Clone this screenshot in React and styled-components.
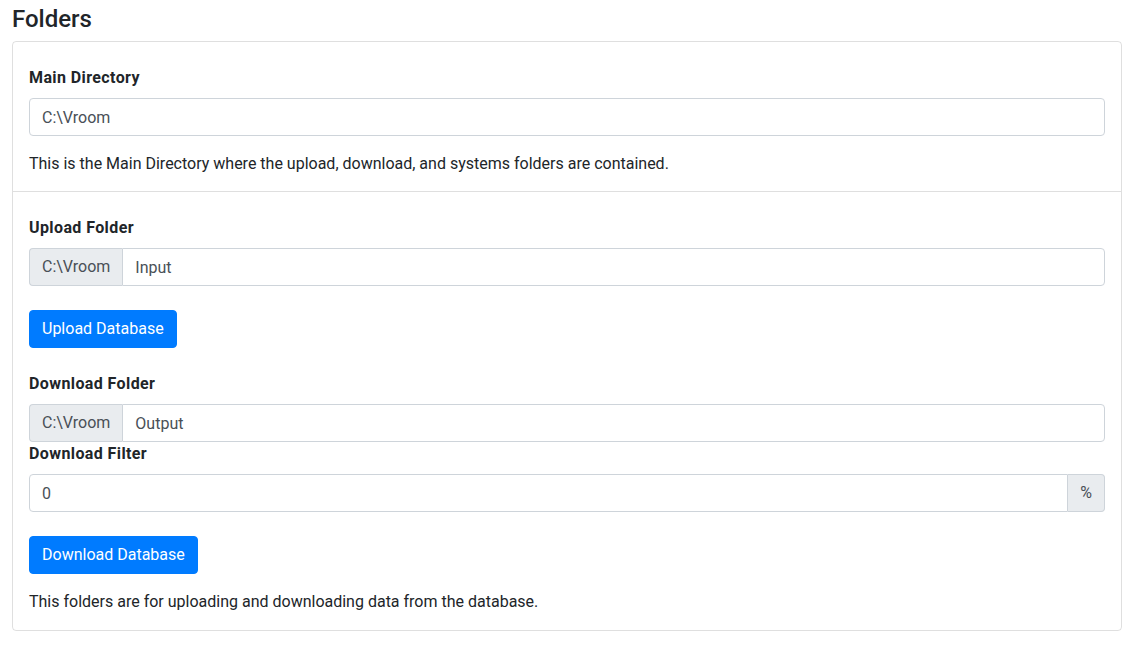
import React from 'react';
import styled, { createGlobalStyle } from 'styled-components';

const GlobalStyle = createGlobalStyle`
  * {
    box-sizing: border-box;
  }
  body {
    margin: 0;
    background: #fff;
    color: #212529;
    font-family: "Segoe UI", Roboto, "Liberation Sans", Arial, sans-serif;
    font-size: 16px;
    line-height: 1.5;
  }
`;

const Field = ({ label, prepend, append, value }) => (
  <>
    <Label>{label}</Label>
    <InputGroup>
      {prepend && <Addon side="left">{prepend}</Addon>}
      <Input defaultValue={value} prepend={!!prepend} append={!!append} />
      {append && <Addon side="right">{append}</Addon>}
    </InputGroup>
  </>
);

const App = () => {
  return (
    <Page>
      <GlobalStyle />
      <Title>Folders</Title>
      <Card>
        <Section>
          <Field label="Main Directory" value="C:\Vroom" />
          <Help>This is the Main Directory where the upload, download, and systems folders are contained.</Help>
        </Section>
        <Section last>
          <Field label="Upload Folder" prepend="C:\Vroom" value="Input" />
          <Button>Upload Database</Button>
          <Group>
            <Field label="Download Folder" prepend="C:\Vroom" value="Output" />
          </Group>
          <Field label="Download Filter" append="%" value="0" />
          <Button>Download Database</Button>
          <Help>This folders are for uploading and downloading data from the database.</Help>
        </Section>
      </Card>
    </Page>
  );
};

export default App;

const Page = styled.div`
  width: 1110px;
  margin: 0 12px;
`;

const Title = styled.h4`
  font-size: 24px;
  font-weight: 500;
  line-height: 29px;
  margin: 5px 0 7px;
`;

const Card = styled.div`
  border: 1px solid rgba(0, 0, 0, 0.125);
  border-radius: 4px;
  display: flex;
  flex-direction: column;
`;

const Section = styled.div`
  padding: ${(p) => (p.last ? '24px 16px 16px' : '24px 16px 15px')};

  & + & {
    border-top: 1px solid rgba(0, 0, 0, 0.125);
  }
`;

const Group = styled.div`
  margin-top: 24px;
`;

const Label = styled.label`
  display: block;
  font-weight: 700;
  letter-spacing: 0.4px;
  margin-bottom: 8px;
`;

const InputGroup = styled.div`
  display: flex;
  align-items: stretch;
  width: 100%;
`;

const Input = styled.input`
  flex: 1;
  min-width: 0;
  height: 38px;
  padding: 6px 12px;
  font-family: inherit;
  font-size: 16px;
  line-height: 1.5;
  color: #495057;
  background: #fff;
  border: 1px solid #ced4da;
  border-radius: ${(p) => `${p.prepend ? 0 : 4}px ${p.append ? 0 : 4}px ${p.append ? 0 : 4}px ${p.prepend ? 0 : 4}px`};
  outline: none;
`;

const Addon = styled.span`
  display: flex;
  align-items: center;
  padding: 6px 12px;
  color: #495057;
  background: #e9ecef;
  border: 1px solid #ced4da;
  white-space: nowrap;
  border-radius: ${(p) => (p.side === 'left' ? '4px 0 0 4px' : '0 4px 4px 0')};
  ${(p) => (p.side === 'left' ? 'border-right: none;' : 'border-left: none;')}
`;

const Button = styled.button`
  display: inline-block;
  margin-top: 24px;
  height: 38px;
  padding: 6px 12px;
  font-family: inherit;
  font-size: 16px;
  line-height: 1.5;
  color: #fff;
  background-color: #007bff;
  border: 1px solid #007bff;
  border-radius: 4px;
  cursor: pointer;

  &:hover {
    background-color: #0069d9;
  }
`;

const Help = styled.p`
  margin: 16px 0 0;
`;
